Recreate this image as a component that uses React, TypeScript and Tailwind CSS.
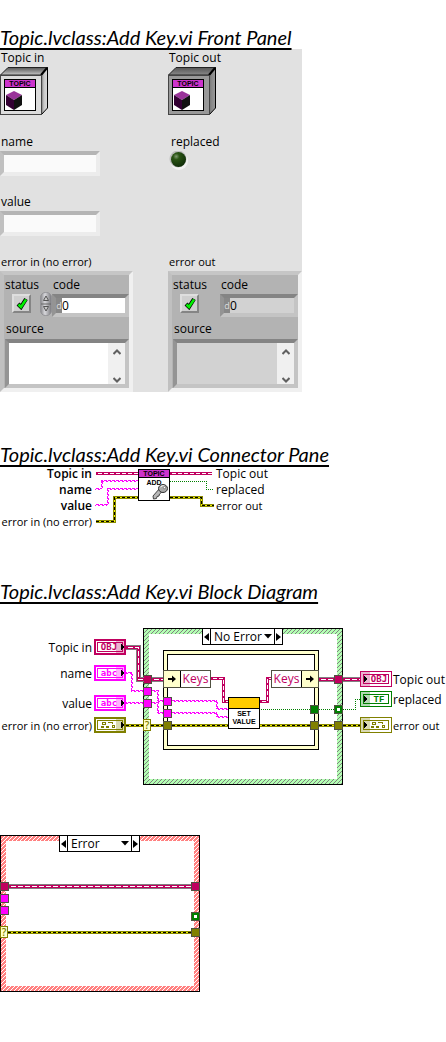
import React from "react";

const OBJ = "#c0005f";
const PINK = "#ff00ff";

function Heading({ children }: { children: React.ReactNode }) {
  return (
    <h2 className="h-[22px] whitespace-nowrap font-[Lato,sans-serif] text-[20px] leading-[20px] italic underline decoration-2 underline-offset-[3px] [text-decoration-skip-ink:none]">
      {children}
    </h2>
  );
}

/* ---------- Front panel ---------- */

function ClassControl({ shade, light }: { shade: string; light: string }) {
  const id = "top" + shade.slice(1);
  return (
    <svg width="48" height="48" viewBox="0 0 48 48" aria-hidden="true">
      <defs>
        <linearGradient id={id} x1="0" y1="0" x2="0" y2="1">
          <stop offset="0" stopColor="#555" />
          <stop offset="1" stopColor={light} />
        </linearGradient>
        <linearGradient id={id + "s"} x1="0" y1="0" x2="1" y2="0">
          <stop offset="0" stopColor="#777" />
          <stop offset="0.4" stopColor={light} />
          <stop offset="1" stopColor={shade} />
        </linearGradient>
      </defs>
      <path d="M0.5 8L8 0.5H47.5L41 8Z" fill={`url(#${id})`} stroke="#222" />
      <path d="M41.5 8L47.5 0.5V41L41.5 47.5Z" fill={`url(#${id}s)`} stroke="#000" />
      <path d="M41 8L47 1" stroke="#000" strokeWidth="2" />
      <rect x="0.5" y="8.5" width="41" height="39" fill={shade} stroke="#444" />
      <rect x="4.5" y="12.5" width="31" height="31" fill="#fff" stroke="#000" />
      <rect x="5" y="13" width="30" height="7" fill="#cc33cc" />
      <path d="M5 20.5H35" stroke="#000" />
      <text x="20" y="19" fontSize="7" fontWeight="bold" textAnchor="middle" fontFamily="Liberation Sans, sans-serif">TOPIC</text>
      <path d="M14 24L22 28L14 33L6 28Z" fill="#993399" />
      <path d="M6 28L14 33V43L6 38Z" fill="#330033" />
      <path d="M22 28L14 33V43L22 38Z" fill="#111" />
    </svg>
  );
}

function Check() {
  return (
    <svg width="12" height="13" viewBox="0 0 12 13" aria-hidden="true">
      <path d="M2 7L5 10L10 2" fill="none" stroke="#000" strokeWidth="4" />
      <path d="M2.5 7.5L5 10L10 2.5" fill="none" stroke="#00f000" strokeWidth="2.500" />
    </svg>
  );
}

function Spinner() {
  return (
    <svg width="12" height="24" viewBox="0 0 12 24" aria-hidden="true">
      <defs>
        <linearGradient id="spin" x1="0" y1="0" x2="1" y2="0">
          <stop offset="0" stopColor="#858589" />
          <stop offset="0.4" stopColor="#d8d8dc" />
          <stop offset="1" stopColor="#77777b" />
        </linearGradient>
      </defs>
      <rect x="0.5" y="0.5" width="11" height="23" rx="5" fill="url(#spin)" stroke="#929296" />
      <path d="M1 12H11" stroke="#666" />
      <path d="M6 4L8.500 8.500H3.500Z" fill="#ccc" stroke="#555" />
      <path d="M6 19L8.500 14.500H3.500Z" fill="#ccc" stroke="#555" />
    </svg>
  );
}

function Chevron({ up }: { up?: boolean }) {
  return (
    <svg width="8" height="6" viewBox="0 0 8 6" aria-hidden="true">
      <path d={up ? "M0.500 5L4 1.500L7.500 5" : "M0.500 1L4 4.500L7.500 1"} fill="none" stroke="#606060" strokeWidth="2" />
    </svg>
  );
}

const SUNK = "border-t-[#848484] border-l-[#949494] border-r-[#c4c4c4] border-b-[#c4c4c4]";

function ErrorCluster({ id, output }: { id: string; output?: boolean }) {
  const field = output ? "bg-[#d2d2d2]" : "bg-white";
  return (
    <div className="flex h-[121px] flex-col border-4 border-t-[#c6c6c6] border-r-[#f0f0f0] border-b-[#f0f0f0] border-l-[#c0c0c0] bg-[#b3b3b3] pl-px">
      <div className="flex pt-px">
        <div className="flex w-[35px] flex-col">
          <label htmlFor={id + "-status"} className="h-[18px] leading-[18px]">status</label>
          <button id={id + "-status"} className="ml-[7px] flex size-[19px] items-center justify-center border-2 border-t-[#dedede] border-r-[#858585] border-b-[#858585] border-l-[#dedede] bg-[#cfcfcf]">
            <Check />
          </button>
        </div>
        <div className="flex w-3 flex-col pt-4">{!output && <Spinner />}</div>
        <div className="flex min-w-0 flex-1 flex-col">
          <label htmlFor={id + "-code"} className="h-[18px] pl-px leading-[17px]">code</label>
          <div className={`flex h-[23px] border-4 ${SUNK}`}>
            <span className="w-[6px] bg-[#888] text-center text-[9px] leading-[15px] text-[#ddd]">d</span>
            <input id={id + "-code"} defaultValue="0" readOnly={output} className={`h-[15px] min-w-0 flex-1 leading-[15px] outline-none ${field}`} />
          </div>
        </div>
      </div>
      <label htmlFor={id + "-source"} className="mt-[3px] h-[19px] pl-px leading-[18px]">source</label>
      <div className={`flex h-[50px] border-4 ${SUNK}`}>
        <textarea id={id + "-source"} readOnly={output} className={`min-w-0 flex-1 resize-none outline-none ${field}`} />
        <div className="flex w-[17px] flex-col items-center justify-between bg-[#f0f0f0] pt-[6px] pb-px">
          <Chevron up />
          <Chevron />
        </div>
      </div>
    </div>
  );
}

function TextControl({ id, label }: { id: string; label: string }) {
  return (
    <div className="flex flex-col">
      <label htmlFor={id} className="h-[18px] pl-px leading-[18px]">{label}</label>
      <input id={id} className="h-[25px] w-[100px] border-4 border-t-[#b4b4b4] border-r-[#ececec] border-b-[#ececec] border-l-[#c0c0c0] bg-[#fafafa] outline-none" />
    </div>
  );
}

function FrontPanel() {
  return (
    <div className="grid w-[302px] grid-cols-[168px_134px] grid-rows-[84px_60px_60px_139px] bg-[#e1e1e1]">
      <div className="flex flex-col">
        <span className="h-[18px] pl-px leading-[18px]">Topic in</span>
        <ClassControl shade="#dcdcdc" light="#c8c8c8" />
      </div>
      <div className="flex flex-col">
        <span className="h-[18px] pl-px leading-[18px]">Topic out</span>
        <ClassControl shade="#999999" light="#8a8a8a" />
      </div>
      <TextControl id="name" label="name" />
      <div className="flex flex-col">
        <span className="h-[18px] pl-[3px] leading-[18px]">replaced</span>
        <svg width="21" height="19" viewBox="0 0 21 19" aria-hidden="true">
          <defs>
            <radialGradient id="led" cx="0.35" cy="0.3" r="0.7">
              <stop offset="0" stopColor="#7f9a70" />
              <stop offset="0.3" stopColor="#2a5414" />
              <stop offset="1" stopColor="#12300a" />
            </radialGradient>
          </defs>
          <circle cx="11" cy="10" r="9" fill="#f2f2f2" />
          <circle cx="10" cy="8" r="8.500" fill="#bdbdbd" />
          <circle cx="10.500" cy="8.500" r="7.500" fill="url(#led)" />
        </svg>
      </div>
      <TextControl id="value" label="value" />
      <div />
      <div className="flex flex-col">
        <span className="h-[18px] pl-px text-[11px] leading-[18px]">error in (no error)</span>
        <div className="w-[133px]"><ErrorCluster id="error-in" /></div>
      </div>
      <div className="flex flex-col">
        <span className="h-[18px] pl-px text-[11px] leading-[18px]">error out</span>
        <ErrorCluster id="error-out" output />
      </div>
    </div>
  );
}

/* ---------- Wires ---------- */

function ObjectWire({ d, thin }: { d: string; thin?: boolean }) {
  return (
    <g fill="none">
      {!thin && <path d={d} stroke="#808080" strokeWidth="5" />}
      <path d={d} stroke={OBJ} strokeWidth="3" />
      <path d={d} stroke="#fff" strokeWidth="1" strokeDasharray={thin ? "4 2" : "5 2"} strokeDashoffset="-2" />
    </g>
  );
}

/* A two-pixel square wave along each straight run between the points. */
function StringWire({ points }: { points: [number, number][] }) {
  return (
    <g fill={PINK}>
      {points.slice(1).map(([x, y], i) => {
        const [px, py] = points[i];
        const across = py === y;
        const start = across ? Math.min(px, x) : Math.min(py, y);
        const length = across ? Math.abs(x - px) : Math.abs(y - py) + 1;
        return Array.from({ length }, (_, k) => {
          const pos = start + k;
          const low = pos % 4 < 2 ? 0 : 1;
          const edge = pos % 4 === 2;
          return across ? (
            <rect key={i + "-" + k} x={pos} y={edge ? y : y + low} width="1" height={edge ? 2 : 1} />
          ) : (
            <rect key={i + "-" + k} x={edge ? x : x + low} y={pos} width={edge ? 2 : 1} height="1" />
          );
        });
      })}
    </g>
  );
}

function ErrorWire({ d }: { d: string }) {
  return (
    <g fill="none">
      <path d={d} stroke="#8a8a00" strokeWidth="3" />
      <path d={d} stroke="#f0f000" />
      <path d={d} stroke="#000" strokeDasharray="3 2" />
    </g>
  );
}

function BooleanWire({ d }: { d: string }) {
  return <path d={d} fill="none" stroke="#007f00" strokeDasharray="1 1" />;
}

/* ---------- Connector pane ---------- */

function ConnectorPane() {
  return (
    <div className="flex">
      <ul className="w-[92px] text-right leading-4 whitespace-nowrap">
        <li className="font-semibold">Topic in</li>
        <li className="font-semibold">name</li>
        <li className="font-semibold">value</li>
        <li className="text-[11px] leading-4">error in (no error)</li>
      </ul>
      <svg width="124" height="64" viewBox="92 466 124 64" shapeRendering="crispEdges" aria-hidden="true">
        <ObjectWire thin d="M96 473.500H138" />
        <ObjectWire thin d="M170 473.500H212" />
        <StringWire points={[[95, 488], [101, 488], [101, 480], [138, 480]]} />
        <StringWire points={[[95, 504], [107, 504], [107, 488], [138, 488]]} />
        <ErrorWire d="M96 521.500H114.500V497.500H138" />
        <ErrorWire d="M170 497.500H201.500V505.500H214" />
        <BooleanWire d="M170 481.500H206.500V489.500H214" />
        <rect x="138.500" y="469.500" width="31" height="31" fill="#fff" stroke="#000" />
        <rect x="139" y="470" width="30" height="7" fill="#cc33cc" />
        <path d="M139 477.500H169" stroke="#000" />
        <g fontFamily="Liberation Sans, sans-serif" fontSize="7" fontWeight="bold" textAnchor="middle">
          <text x="154" y="476">TOPIC</text>
          <text x="154" y="485">ADD</text>
        </g>
        <g shapeRendering="auto">
          <path d="M160 488L153 496L153.500 499L156.500 498.500L157 496.500L159 496L159.500 494L163 491Z" fill="#b8b8b8" stroke="#444" />
          <ellipse cx="163" cy="488.500" rx="4.500" ry="4" fill="#aaa" stroke="#333" />
          <path d="M160.500 487Q162 485 164.500 486" stroke="#fff" fill="none" />
          <circle cx="164.500" cy="487.500" r="1.200" fill="#fff" stroke="#444" strokeWidth="0.600" />
        </g>
      </svg>
      <ul className="leading-4 whitespace-nowrap">
        <li>Topic out</li>
        <li>replaced</li>
        <li className="text-[11px] leading-4">error out</li>
      </ul>
    </div>
  );
}

/* ---------- Block diagram ---------- */

function Terminal({ kind, output, className }: { kind: "OBJ" | "abc" | "TF" | "err"; output?: boolean; className: string }) {
  const color = { OBJ, abc: PINK, TF: "#008000", err: "#808000" }[kind];
  const cx = output ? 18 : 14;
  return (
    <svg className={`absolute ${className}`} width="32" height="16" viewBox="0 0 32 16" shapeRendering="crispEdges" aria-hidden="true">
      {output ? (
        <rect x="0.500" y="0.500" width="31" height="15" fill="#fff" stroke={color} />
      ) : (
        <rect x="1" y="1" width="30" height="14" fill="#fff" stroke={color} strokeWidth="2" />
      )}
      <rect x="3.500" y="3.500" width="25" height="9" fill="none" stroke={color} />
      {kind === "err" ? (
        <g fill="none" stroke={color}>
          <path d={`M${cx - 5.5} 5.500h3v2h-3z`} />
          <path d={`M${cx} 5.500h4v1`} />
          <path d={`M${cx - 7} 9.500h3M${cx - 7} 10.500h3M${cx - 2} 9.500h3M${cx - 2} 10.500h3`} />
          <path d={`M${cx + 4.5} 8.500h2v2h-2z`} />
        </g>
      ) : (
        <text x={cx + 1} y="11" textAnchor="middle" fontSize="9" fontWeight="bold" fontFamily={kind === "TF" ? "Liberation Mono, monospace" : "DejaVu Sans Mono, monospace"} fill={color}>
          {kind}
        </text>
      )}
      <rect x={output ? 1 : 22} y="1" width="9" height="14" fill={color} fillOpacity="0.300" />
      <path d={output ? "M4 4.500L8 8L4 11.500Z" : "M27 4.500L31 8L27 11.500Z"} fill="#000" />
    </svg>
  );
}

function Tunnel({ className, hollow }: { className: string; hollow?: boolean }) {
  return (
    <span className={`absolute flex size-[9px] items-center justify-center border border-[#505040] ${className}`}>
      {hollow && <span className="size-[3px] bg-white" />}
    </span>
  );
}

function Arrow({ d }: { d: string }) {
  return (
    <svg width="7" height="8" viewBox="0 0 7 8" aria-hidden="true">
      <path d={d} fill="#000" />
    </svg>
  );
}

function CaseStructure({ label, hatch, children }: { label: string; hatch: string; children?: React.ReactNode }) {
  return (
    <div className={`relative h-[157px] w-[200px] border border-black bg-size-[4px_4px] p-[5px] ${hatch}`}>
      <div className="h-full bg-white" />
      {children}
      <Tunnel className="-left-px top-[46px] bg-[#c0005f]" />
      <Tunnel className="-left-px top-[58px] bg-[#ff00ff]" />
      <Tunnel className="-left-px top-[70px] bg-[#ff00ff]" />
      <span className="absolute -left-px top-[90px] h-[12px] w-[8px] border border-[#808000] bg-[#ffffcc] text-center text-[10px] leading-[10px] font-semibold text-[#808000]">?</span>
      <Tunnel className="-right-px top-[46px] bg-[#c0005f]" />
      <Tunnel className="-right-px top-[76px] bg-[#008000]" hollow />
      <Tunnel className="-right-px top-[92px] bg-[#808000]" />
      <div className="absolute -top-px left-[58px] flex h-[17px] w-[81px] border border-black bg-white">
        <button aria-label="Previous case" className="flex w-2 items-center justify-center border-r border-black">
          <Arrow d="M6 0L1 4L6 8Z" />
        </button>
        <div className="relative min-w-0 flex-1">
          <select aria-label="Case" className="block h-[15px] w-full appearance-none pl-[3px] leading-[15px] outline-none">
            <option>{label}</option>
          </select>
          <svg className="pointer-events-none absolute top-[5px] right-[2px]" width="8" height="5" viewBox="0 0 8 5" aria-hidden="true">
            <path d="M0 0H8L4 4.500Z" />
          </svg>
        </div>
        <button aria-label="Next case" className="flex w-2 items-center justify-center border-l border-black">
          <Arrow d="M1 0L6 4L1 8Z" />
        </button>
      </div>
    </div>
  );
}

function KeysArrow() {
  return (
    <span className="flex w-4 items-center justify-center bg-[#ffffcc]">
      <svg width="8" height="8" viewBox="0 0 8 8" aria-hidden="true">
        <path d="M0 3H4V0.500L8 4L4 7.500V5H0Z" />
      </svg>
    </span>
  );
}

function BlockDiagram() {
  const label = "absolute leading-4 whitespace-nowrap";
  return (
    <div className="relative h-[157px]">
      <div className="absolute top-0 left-[143px]">
        <CaseStructure label="No Error" hatch="bg-[linear-gradient(135deg,#b3ffb3_0_44%,#808080_44%_56%,#b3ffb3_56%)]">
          <div className="absolute top-[21px] left-[19px] h-[100px] w-[156px] border border-black bg-[#ffffcc] p-[3px]">
            <div className="h-full border border-black bg-white" />
          </div>
        </CaseStructure>
      </div>
      <svg className="absolute top-0 left-0" width="400" height="157" viewBox="0 628 400 157" shapeRendering="crispEdges" aria-hidden="true">
        <ObjectWire d="M126 647.500H138.500V679.500H144" />
        <ObjectWire d="M152 679.500H164" />
        <ObjectWire d="M319 679.500H334" />
        <ObjectWire d="M343 679.500H360" />
        <ObjectWire thin d="M211 678.500H223.500V701.500H228" />
        <ObjectWire thin d="M260 701.500H267.500V678.500H271" />
        <StringWire points={[[126, 672], [131, 672], [131, 690], [143, 690]]} />
        <StringWire points={[[126, 702], [143, 702]]} />
        <StringWire points={[[152, 690], [157, 690], [157, 700], [163, 700]]} />
        <StringWire points={[[152, 702], [157, 702], [157, 712], [163, 712]]} />
        <StringWire points={[[172, 700], [216, 700], [216, 708], [228, 708]]} />
        <StringWire points={[[172, 712], [216, 712], [216, 716], [228, 716]]} />
        <ErrorWire d="M126 725.500H143" />
        <ErrorWire d="M151 725.500H163" />
        <ErrorWire d="M172 725.500H310" />
        <ErrorWire d="M319 725.500H334" />
        <ErrorWire d="M343 725.500H360" />
        <BooleanWire d="M261 709.500H310" />
        <BooleanWire d="M319 709.500H334" />
        <BooleanWire d="M343 709.500H355.500V699.500H360" />
      </svg>
      <Tunnel className="top-[69px] left-[163px] bg-[#ff00ff]" />
      <Tunnel className="top-[81px] left-[163px] bg-[#ff00ff]" />
      <Tunnel className="top-[93px] left-[163px] bg-[#808000]" />
      <Tunnel className="top-[77px] left-[310px] bg-[#008000]" />
      <Tunnel className="top-[93px] left-[310px] bg-[#808000]" />

      <div className="absolute top-[42px] left-[163px] flex h-[18px] w-[48px] border border-[#505040] bg-white">
        <KeysArrow />
        <span className="flex-1 border-l border-black text-center leading-4 text-[#c0005f]">Keys</span>
      </div>
      <div className="absolute top-[42px] left-[271px] flex h-[18px] w-[48px] border border-[#505040] bg-white">
        <span className="flex-1 border-r border-black text-center leading-4 text-[#c0005f]">Keys</span>
        <KeysArrow />
      </div>
      <div className="absolute top-[69px] left-[228px] flex size-8 flex-col border border-black bg-white text-center font-['Liberation_Sans',sans-serif] text-[7px] leading-[8px] font-bold">
        <span className="mb-px h-[11px] border-b border-black bg-[#ffcc00]" />
        <span>SET</span>
        <span>VALUE</span>
      </div>

      <span className={`${label} top-[12px] left-0 w-[92px] text-right`}>Topic in</span>
      <span className={`${label} top-[38px] left-0 w-[92px] text-right`}>name</span>
      <span className={`${label} top-[68px] left-0 w-[92px] text-right`}>value</span>
      <span className={`${label} top-[90px] left-0 w-[92px] text-right text-[11px]`}>error in (no error)</span>
      <Terminal kind="OBJ" className="top-[11px] left-[94px]" />
      <Terminal kind="abc" className="top-[37px] left-[94px]" />
      <Terminal kind="abc" className="top-[67px] left-[94px]" />
      <Terminal kind="err" className="top-[89px] left-[94px]" />
      <Terminal kind="OBJ" output className="top-[43px] left-[360px]" />
      <Terminal kind="TF" output className="top-[63px] left-[360px]" />
      <Terminal kind="err" output className="top-[89px] left-[360px]" />
      <span className={`${label} top-[44px] left-[393px]`}>Topic out</span>
      <span className={`${label} top-[64px] left-[393px]`}>replaced</span>
      <span className={`${label} top-[90px] left-[393px] text-[11px]`}>error out</span>
    </div>
  );
}

export default function App() {
  return (
    <main className="flex flex-col bg-white pt-[27px] pb-[50px] font-['Open_Sans',sans-serif] text-[12px] text-black">
      <section>
        <Heading>Topic.lvclass:Add Key.vi Front Panel</Heading>
        <FrontPanel />
      </section>
      <section className="mt-[52px]">
        <Heading>Topic.lvclass:Add Key.vi Connector Pane</Heading>
        <ConnectorPane />
      </section>
      <section className="mt-[51px] flex flex-col">
        <Heading>Topic.lvclass:Add Key.vi Block Diagram</Heading>
        <div className="mt-[25px]">
          <BlockDiagram />
        </div>
        <div className="mt-[50px]">
          <CaseStructure label="Error" hatch="bg-[linear-gradient(135deg,#ff8080_0_44%,#ffffff_44%_56%,#ff8080_56%)]">
            <svg className="absolute -top-px -left-px" width="200" height="157" viewBox="0 835 200 157" shapeRendering="crispEdges" aria-hidden="true">
              <ObjectWire d="M9 886.500H192" />
              <ErrorWire d="M8 932.500H192" />
            </svg>
          </CaseStructure>
        </div>
      </section>
    </main>
  );
}
